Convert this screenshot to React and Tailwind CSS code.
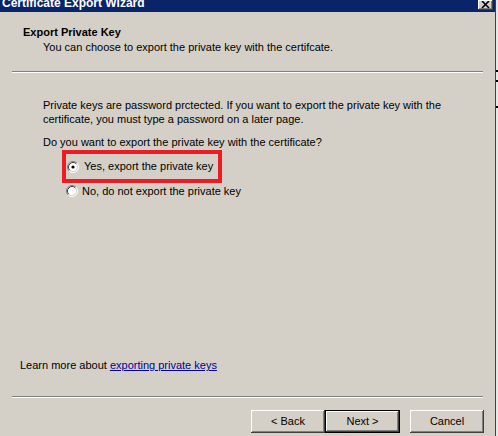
const font = { fontFamily: '"Liberation Sans", Arial, sans-serif' };

function Radio({ checked }) {
  return (
    <svg width="12" height="12" viewBox="0 0 12 12" className="shrink-0">
      <circle cx="6" cy="6" r="5" fill="#ffffff" />
      <path d="M2.11 9.89 A5.5 5.5 0 0 1 9.89 2.11" fill="none" stroke="#808080" strokeWidth="1" />
      <path d="M9.89 2.11 A5.5 5.5 0 0 1 2.11 9.89" fill="none" stroke="#ffffff" strokeWidth="1" />
      <path d="M2.82 9.18 A4.5 4.5 0 0 1 9.18 2.82" fill="none" stroke="#404040" strokeWidth="1" />
      <path d="M9.18 2.82 A4.5 4.5 0 0 1 2.82 9.18" fill="none" stroke="#d4d0c8" strokeWidth="1" />
      {checked && <circle cx="6" cy="6" r="1.6" fill="#000000" />}
    </svg>
  );
}

function Button({ children, isDefault }) {
  if (isDefault) {
    return (
      <div className="w-[75px] h-[23px] border border-black flex">
        <div className="flex-1 flex items-center justify-center bg-[#d4d0c8] shadow-[inset_-1px_-1px_#404040,inset_1px_1px_#ffffff,inset_-2px_-2px_#808080]">
          {children}
        </div>
      </div>
    );
  }
  return (
    <div className="w-[74px] h-[23px] flex items-center justify-center bg-[#d4d0c8] shadow-[inset_-1px_-1px_#404040,inset_1px_1px_#ffffff,inset_-2px_-2px_#808080]">
      {children}
    </div>
  );
}

function Separator() {
  return (
    <div className="ml-[12px] w-[471px]">
      <div className="h-px bg-[#808080]" />
      <div className="h-px bg-white" />
    </div>
  );
}

export default function App() {
  return (
    <div className="w-[498px] h-[436px] flex bg-white text-[11px] text-black overflow-hidden" style={font}>
      <div className="w-[495px] h-full bg-[#d4d0c8] flex flex-col">
        {/* title bar */}
        <div className="h-[12px] bg-[#0a246a] flex items-start justify-between overflow-hidden">
          <span className="pl-[2px] -mt-[4px] text-white font-bold text-[12px] leading-[14px] whitespace-nowrap">
            Certificate Export Wizard
          </span>
          <div className="mr-[2px] w-[15px] h-[10px] bg-[#d4d0c8] shadow-[inset_-1px_-1px_#404040,inset_1px_1px_#ffffff,inset_-2px_-2px_#808080] flex items-end justify-center">
            <svg width="9" height="8" viewBox="0 0 9 8" className="mb-[1px]">
              <path d="M1 0 L8 7 M8 0 L1 7" stroke="#000" strokeWidth="1.6" />
            </svg>
          </div>
        </div>

        {/* header */}
        <div className="h-[59px] pt-[13px]">
          <div className="pl-[23px] font-bold leading-[14px]">Export Private Key</div>
          <div className="pl-[43px] pt-[1px] leading-[14px]">
            You can choose to export the private key with the certifcate.
          </div>
        </div>
        <Separator />

        {/* body */}
        <div className="flex-1 flex flex-col pl-[43px] pt-[25px]">
          <div className="leading-[14px] whitespace-nowrap">
            Private keys are password prctected. If you want to export the private key with the
            <br />
            certificate, you must type a password on a later page.
          </div>
          <div className="mt-[9px] leading-[14px]">Do you want to export the private key with the certificate?</div>
          <div className="mt-[1px] ml-[19px] self-start w-[160px] h-[33px] border-[4px] border-[#ed1c24] flex items-center gap-[5px] pl-[1px]">
            <Radio checked />
            <span>Yes, export the private key</span>
          </div>
          <div className="mt-[1px] ml-[23px] flex items-center gap-[4px] h-[14px]">
            <Radio />
            <span>No, do not export the private key</span>
          </div>
          <div className="mt-auto mb-[24px] -ml-[23px] leading-[14px]">
            Learn more about{" "}
            <span className="text-[#0000a0] underline">exporting private keys</span>
          </div>
        </div>
        <Separator />

        {/* buttons */}
        <div className="h-[38px] pt-[12px] flex items-start pl-[251px]">
          <Button>&lt; Back</Button>
          <Button isDefault>Next &gt;</Button>
          <div className="w-[10px]" />
          <Button>Cancel</Button>
        </div>
      </div>
      <div className="w-px h-full bg-[#404040]" />
      <div className="flex-1 h-full bg-[#e8e8e8] flex flex-col">
        <div className="h-[70px]" />
        <div className="h-[2px] bg-black" />
        <div className="h-[8px]" />
        <div className="h-[2px] bg-black" />
        <div className="h-[24px]" />
        <div className="h-[2px] bg-black" />
      </div>
    </div>
  );
}
